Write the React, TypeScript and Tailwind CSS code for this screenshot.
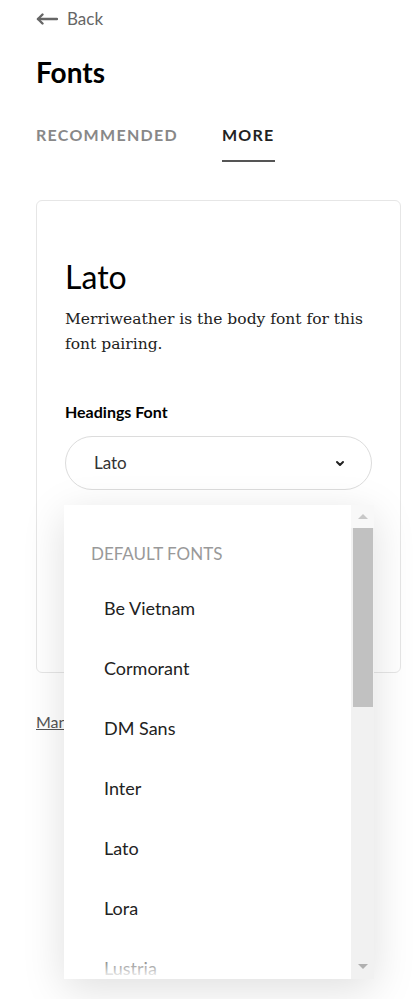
import { useState } from "react";

const fonts = ["Be Vietnam", "Cormorant", "DM Sans", "Inter", "Lato", "Lora", "Lustria"];

function BackArrow() {
  return (
    <svg width="22" height="12" viewBox="0 0 22 12" fill="none" stroke="#666" strokeWidth="2.4" strokeLinecap="round" strokeLinejoin="round">
      <path d="M21 6H2" />
      <path d="M6.5 1.5L2 6l4.5 4.5" />
    </svg>
  );
}

function Chevron() {
  return (
    <svg width="10" height="7" viewBox="0 0 10 7" fill="none" stroke="#222" strokeWidth="2" strokeLinecap="round" strokeLinejoin="round">
      <path d="M2 2l3 3 3-3" />
    </svg>
  );
}

function FontDropdown() {
  return (
    <div className="absolute left-[28px] top-[305px] w-[310px] h-[474px] bg-white shadow-[0_10px_40px_rgba(0,0,0,0.13)] flex overflow-hidden">
      <div className="relative flex-1 pt-[25px]">
        <div className="h-12 flex items-center pl-[27px] text-[17px] text-[#999] uppercase">Default fonts</div>
        {fonts.map((f) => (
          <div key={f} className="h-[60px] flex items-center pl-10 text-[18px] text-[#222]">
            {f}
          </div>
        ))}
        <div className="absolute left-0 right-0 bottom-0 h-[34px] bg-gradient-to-b from-white/0 to-white" />
      </div>
      <div className="w-[23px] bg-[#f1f1f1] flex flex-col items-center">
        <div className="h-[23px] w-full bg-[#f8f8f8] flex items-center justify-center">
          <div className="w-0 h-0 border-l-[5px] border-r-[5px] border-b-[5px] border-l-transparent border-r-transparent border-b-[#c8c8c8]" />
        </div>
        <div className="w-[20px] h-[179px] bg-[#c1c1c1]" />
        <div className="flex-1" />
        <div className="h-[26px] w-full flex items-center justify-center">
          <div className="w-0 h-0 border-l-[5px] border-r-[5px] border-t-[5px] border-l-transparent border-r-transparent border-t-[#b0b0b0]" />
        </div>
      </div>
    </div>
  );
}

export default function App() {
  const [tab, setTab] = useState("more");
  const tabClass = (active: boolean) =>
    active
      ? "pb-[13px] border-b-2 border-[#555] text-[#222] uppercase tracking-[0.08em]"
      : "pb-[13px] border-b-2 border-transparent text-[#888] uppercase tracking-[0.08em]";
  return (
    <div className="min-h-screen bg-white pl-9 pr-[15px] font-['Lato',sans-serif] text-[#111]">
      <div className="flex items-center gap-[9px] h-[24px] mt-[7px] text-[17px] text-[#666]">
        <BackArrow />
        <span>Back</span>
      </div>
      <h1 className="mt-[25px] text-[28px] leading-8 font-bold text-black">Fonts</h1>
      <div className="flex gap-[44px] mt-[35px] text-[16px] font-bold">
        <button onClick={() => setTab("recommended")} className={tabClass(tab === "recommended")}>
          Recommended
        </button>
        <button onClick={() => setTab("more")} className={tabClass(tab === "more")}>
          More
        </button>
      </div>

      <div className="relative mt-[38px]">
        <div className="border border-[#e6e6e6] rounded-md px-7 pt-[56px] pb-[182px]">
          <h2 className="text-[32px] leading-10 text-black">Lato</h2>
          <p className="mt-[10px] font-['DejaVu_Serif',serif] text-[15.5px] leading-[25px] text-[#222]">
            Merriweather is the body font for this font pairing.
          </p>
          <div className="mt-[43px] text-[16px] font-bold text-black">Headings Font</div>
          <div className="mt-[12px] h-[54px] rounded-full border border-[#dcdcdc] flex items-center justify-between pl-7 pr-[26px]">
            <span className="text-[17px] text-[#333]">Lato</span>
            <Chevron />
          </div>
        </div>
        <a className="block mt-[37px] text-[16px] text-[#555] underline">Manage custom fonts</a>
        <FontDropdown />
      </div>
    </div>
  );
}
